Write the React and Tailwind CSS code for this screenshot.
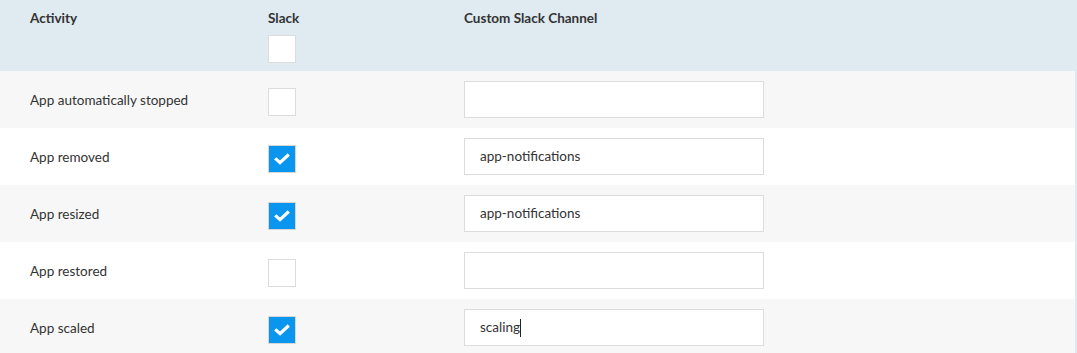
import React from "react";

const rows = [
  { name: "App automatically stopped", checked: false, channel: "" },
  { name: "App removed", checked: true, channel: "app-notifications" },
  { name: "App resized", checked: true, channel: "app-notifications" },
  { name: "App restored", checked: false, channel: "" },
  { name: "App scaled", checked: true, channel: "scaling", cursor: true },
];

function Box({ checked }) {
  if (checked) {
    return (
      <div className="w-[28px] h-[28px] bg-[#0a96ee] border border-[#d6d6d6] flex items-center justify-center">
        <svg width="16" height="12" viewBox="0 0 16 12">
          <path d="M2.4 6.4 L6 9.6 L13.6 2.6" fill="none" stroke="#fff" strokeWidth="3.2" strokeLinecap="square" />
        </svg>
      </div>
    );
  }
  return <div className="w-[28px] h-[28px] bg-white border border-[#dcdcdc]" />;
}

export default function App() {
  return (
    <div className="w-[1077px] h-[353px] bg-[#dfeaf1] overflow-hidden text-[#333333]" style={{ fontFamily: "Lato, 'Open Sans', sans-serif" }}>
      <div className="h-[71px] flex">
        <div className="w-[268px] pl-[30px] pt-[8px] text-[13.5px] font-bold">Activity</div>
        <div className="w-[196px] pt-[8px] flex flex-col">
          <span className="text-[13.5px] font-bold leading-[20px]">Slack</span>
          <div className="mt-[7px]"><Box checked={false} /></div>
        </div>
        <div className="pt-[8px] text-[13.5px] font-bold">Custom Slack Channel</div>
      </div>
      <div className="w-[1075px]">
        {rows.map((r, i) => (
          <div key={i} className={`h-[57px] flex items-center ${i % 2 === 0 ? "bg-[#f7f7f7]" : "bg-white"}`}>
            <div className="w-[268px] pl-[30px] text-[13.5px] pt-[1px]">{r.name}</div>
            <div className="w-[196px] pt-[5px]"><Box checked={r.checked} /></div>
            <div className="w-[300px] h-[37px] bg-white border border-[#dcdcdc] flex items-center pl-[15px] text-[13.5px]">
              <span>{r.channel}</span>
              {r.cursor && <span className="w-px h-[18px] bg-[#222]" />}
            </div>
          </div>
        ))}
      </div>
    </div>
  );
}
